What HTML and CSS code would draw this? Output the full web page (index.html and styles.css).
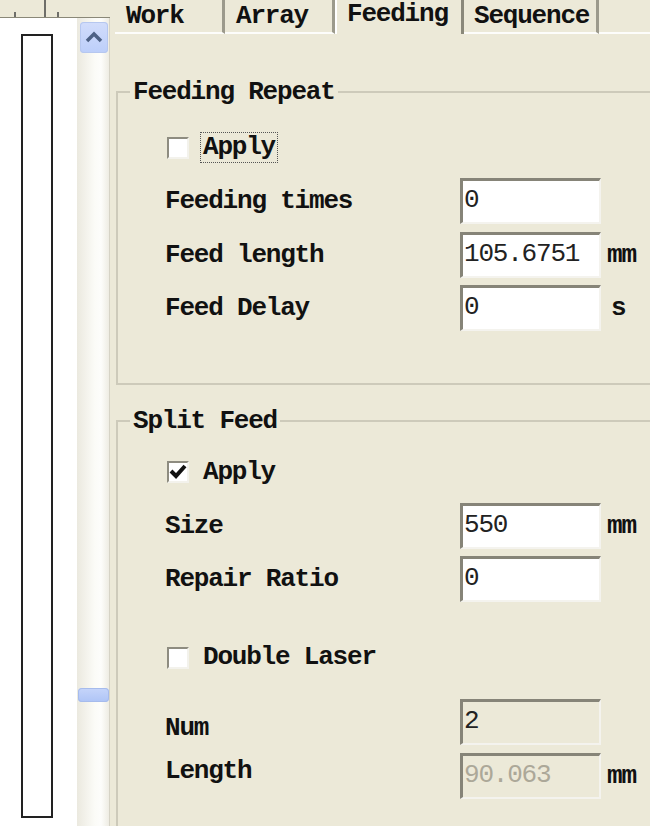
FILE: index.html
```html
<!DOCTYPE html>
<html lang="en">

<head>
  <meta charset="UTF-8" />
  <title>Feeding</title>
  <link rel="stylesheet" href="styles.css">
</head>

<body>
  <div class="window">
    <div class="side">
      <div class="ruler">
        <svg width="110" height="18" viewBox="0 0 110 18">
          <line x1="15" y1="12" x2="15" y2="17" stroke="#444" stroke-width="1.5" />
          <line x1="45" y1="0" x2="45" y2="17" stroke="#444" stroke-width="1.5" />
          <line x1="58" y1="12" x2="58" y2="17" stroke="#444" stroke-width="1.5" />
        </svg>
      </div>
      <div class="side-body">
        <div class="tree">
          <div class="frame"></div>
        </div>
        <div class="scrollbar">
          <div class="scroll-btn">
            <svg width="28" height="31" viewBox="0 0 28 31">
              <polyline points="7,19 14,12 21,19" fill="none" stroke="#4d6185" stroke-width="3.5" />
            </svg>
          </div>
          <div class="scroll-thumb"></div>
        </div>
      </div>
    </div>

    <div class="panel">
      <div class="tabs">
        <div class="tab">Work</div>
        <div class="tab">Array</div>
        <div class="tab active">Feeding</div>
        <div class="tab last">Sequence</div>
        <div class="tab-fill"></div>
      </div>

      <div class="page">
        <fieldset class="group first">
          <legend>Feeding Repeat</legend>
          <div class="check-row">
            <span class="box"></span>
            <span class="check-text focus">Apply</span>
          </div>
          <div class="field">
            <span class="label">Feeding times</span>
            <span class="input">0</span>
          </div>
          <div class="field">
            <span class="label">Feed length</span>
            <span class="input">105.6751</span>
            <span class="unit">mm</span>
          </div>
          <div class="field">
            <span class="label">Feed Delay</span>
            <span class="input">0</span>
            <span class="unit sec">s</span>
          </div>
        </fieldset>

        <fieldset class="group second">
          <legend>Split Feed</legend>
          <div class="check-row">
            <span class="box checked">
              <svg width="18" height="18" viewBox="0 0 18 18">
                <polyline points="2,8 7,13 16,3" fill="none" stroke="#111" stroke-width="4" />
              </svg>
            </span>
            <span class="check-text">Apply</span>
          </div>
          <div class="field">
            <span class="label">Size</span>
            <span class="input">550</span>
            <span class="unit">mm</span>
          </div>
          <div class="field">
            <span class="label">Repair Ratio</span>
            <span class="input">0</span>
          </div>
          <div class="check-row laser">
            <span class="box"></span>
            <span class="check-text">Double Laser</span>
          </div>
          <div class="field num">
            <span class="label">Num</span>
            <span class="input disabled">2</span>
          </div>
          <div class="field len">
            <span class="label">Length</span>
            <span class="input disabled grey">90.063</span>
            <span class="unit">mm</span>
          </div>
        </fieldset>
      </div>
    </div>
  </div>
</body>

</html>
```

FILE: styles.css
```css
html, body {
  margin: 0;
  background: #ece9d8;
}

body {
  font-family: "Liberation Mono", monospace;
  font-size: 26px;
  font-weight: bold;
  letter-spacing: -1.2px;
  color: #111;
}

.window {
  display: flex;
  width: 650px;
  height: 826px;
  overflow: hidden;
}

/* left tree + scrollbar */
.side {
  display: flex;
  flex-direction: column;
  width: 110px;
  flex-shrink: 0;
}

.ruler {
  height: 17px;
  border-bottom: 1px solid #8a8878;
}

.ruler svg {
  display: block;
}

.side-body {
  flex: 1;
  display: flex;
}

.tree {
  width: 77px;
  background: #fff;
}

.frame {
  margin: 16px 0 0 21px;
  width: 28px;
  height: 780px;
  border: 2px solid #222;
  background: #fff;
}

.scrollbar {
  flex: 1;
  display: flex;
  flex-direction: column;
  background: linear-gradient(to right, #ebe9df, #fbfbf7 55%, #fdfdfb 75%, #eeece3);
  border-right: 1px solid #d6d3c6;
}

.scroll-btn {
  margin: 4px 0 0 3px;
  width: 28px;
  height: 31px;
  border-radius: 4px;
  background: linear-gradient(to bottom, #d2ddfb, #bccefa);
  box-shadow: inset 0 0 0 1px #b6c7ef;
}

.scroll-btn svg {
  display: block;
}

.scroll-thumb {
  margin: auto 0 124px 1px;
  width: 31px;
  height: 14px;
  border-radius: 4px;
  background: linear-gradient(to bottom, #c6d5fa, #aec4f6);
  box-shadow: inset 0 0 0 1px #a6bbec;
}

/* tab panel */
.panel {
  flex: 1;
  display: flex;
  flex-direction: column;
  overflow: hidden;
}

.tabs {
  display: flex;
  height: 34px;
  padding-left: 5px;
}

.tab {
  height: 32px;
  line-height: 32px;
  padding-left: 11px;
  width: 96px;
  border-right: 3px solid #9c9a8c;
  border-bottom: 2px solid #fdfdfb;
  white-space: nowrap;
}

.tab.active {
  height: 34px;
  width: 114px;
  line-height: 29px;
  padding-left: 10px;
  border-left: 2px solid #fff;
  border-right: 3px solid #8a887a;
  border-bottom: none;
}

.tab.last {
  width: 122px;
  padding-left: 10px;
}

.tab-fill {
  flex: 1;
  border-bottom: 2px solid #fdfdfb;
}

.page {
  padding: 43px 0 0 6px;
}

.group {
  margin: 0 -30px 0 0;
  padding: 0 0 44px 47px;
  border: 2px solid #cdcaba;
  min-width: 0;
}

.group legend {
  margin-left: -35px;
  padding: 0 3px;
  line-height: 30px;
}

.group.second {
  margin-top: 21px;
}

.check-row {
  display: flex;
  align-items: center;
  height: 31px;
  margin: 25px 0 15px 2px;
  gap: 11px;
}

.group.second .check-row {
  margin-top: 21px;
}

.group.second .check-row.laser {
  margin: 40px 0 26px 2px;
}

.box {
  width: 18px;
  height: 18px;
  background: #fff;
  border: 2px solid;
  border-color: #8e8c80 #f3f2ec #f3f2ec #8e8c80;
  display: flex;
  align-items: center;
  justify-content: center;
}

.check-text {
  padding: 0 2px;
  border: 1px dotted transparent;
  line-height: 29px;
}

.check-text.focus {
  border-color: #555;
}

.field {
  display: grid;
  grid-template-columns: 295px 141px auto;
  align-items: center;
  height: 46px;
  margin-bottom: 7.5px;
}

.input {
  box-sizing: border-box;
  height: 46px;
  padding: 0 0 4px 1px;
  line-height: 38px;
  background: #fff;
  border: 3px solid;
  border-color: #868478 #f4f3ee #f4f3ee #868478;
  border-width: 3px 2px 2px 3px;
  font-weight: normal;
  color: #222;
  white-space: nowrap;
  overflow: hidden;
}

.input.disabled {
  background: #ece9d8;
}

.input.grey {
  color: #aca899;
}

.unit {
  margin-left: 6px;
}

.unit.sec {
  margin-left: 10px;
}

.field.num .label {
  margin-top: 12px;
}

.field.len .label {
  margin-bottom: 10px;
}
```
